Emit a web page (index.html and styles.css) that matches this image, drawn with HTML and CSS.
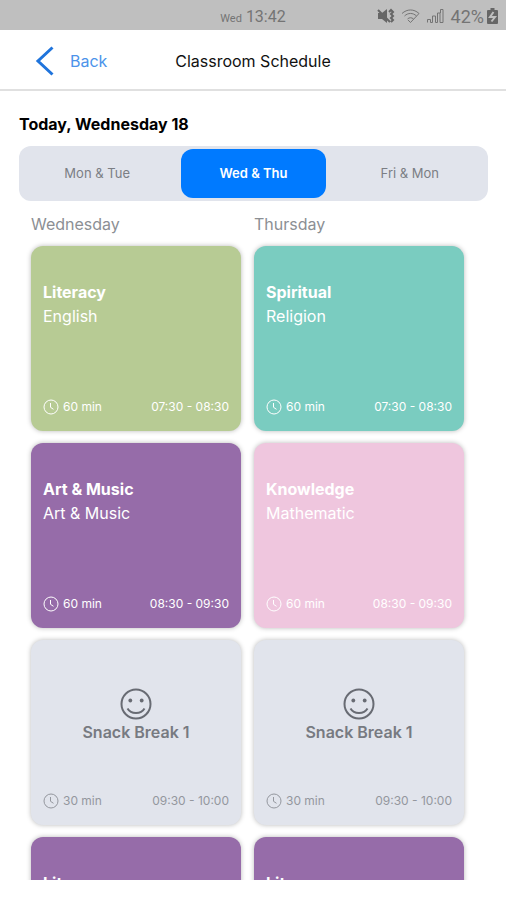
FILE: index.html
```html
<!DOCTYPE html>
<html lang="en">
<head>
<meta charset="utf-8">
<meta name="viewport" content="width=device-width, initial-scale=1">
<title>Classroom Schedule</title>
<link rel="stylesheet" href="styles.css">
</head>
<body>
<svg class="sprite" aria-hidden="true">
  <symbol id="clock" viewBox="0 0 16 16">
    <circle cx="8" cy="8" r="7"/>
    <path d="M7.500 4v4.300l3 2"/>
  </symbol>
  <symbol id="smile" viewBox="0 0 32 32">
    <circle cx="16" cy="16" r="14.500"/>
    <circle class="eye" cx="10.300" cy="12.500" r="1.900"/>
    <circle class="eye" cx="21.700" cy="12.500" r="1.900"/>
    <path d="M7.500 20.500c3.500 6 13.500 6 17 0"/>
  </symbol>
</svg>

<div class="status">
  <div class="status-time"><span class="status-day">Wed</span> 13:42</div>
  <div class="status-icons">
    <svg width="18" height="16" viewBox="0 0 18 16">
      <path class="solid" d="M1 5h4l5-4v14l-5-4H1z"/>
      <path class="heavy" d="M1 2l12 12M12 4l2-2 2 2-2 2 2 2-2 2 2 2-2 2"/>
    </svg>
    <svg width="19" height="16" viewBox="0 0 19 16">
      <path d="M1 5.500C6 .800 13 .800 18 5.500L9.500 14.500 7 12M3.500 8c3.500-3.400 8.500-3.400 12 0M6.500 11c1.800-1.700 4.200-1.700 6 0"/>
    </svg>
    <svg width="19" height="16" viewBox="0 0 19 16">
      <path d="M1.500 14.500v-3h3v3h2V8h3v6.500h2V5h2.500v9.500h3V1.500h-2.500V5"/>
    </svg>
    <span class="battery-level">42%</span>
    <svg width="11" height="16" viewBox="0 0 11 16">
      <path class="solid" d="M3.500 0h4v2H10a1 1 0 0 1 1 1v12a1 1 0 0 1-1 1H1a1 1 0 0 1-1-1V3a1 1 0 0 1 1-1h2.500z"/>
      <path class="cutout" d="M6.500 4L3 9h5l-3.500 4.500"/>
    </svg>
  </div>
</div>

<header class="nav">
  <a class="back" href="#">
    <svg width="18" height="30" viewBox="0 0 18 30"><path d="M16.500 1.500L2 15l14.500 13.500"/></svg>
    <span>Back</span>
  </a>
  <h1 class="nav-title">Classroom Schedule</h1>
</header>

<main class="content">
  <h2 class="today">Today, Wednesday 18</h2>

  <div class="segments" role="tablist">
    <button class="segment" type="button" role="tab" aria-selected="false">Mon &amp; Tue</button>
    <button class="segment active" type="button" role="tab" aria-selected="true">Wed &amp; Thu</button>
    <button class="segment" type="button" role="tab" aria-selected="false">Fri &amp; Mon</button>
  </div>

  <div class="days">
    <section class="day">
      <h3 class="day-name">Wednesday</h3>
      <article class="card green">
        <div class="subject"><h4>Literacy</h4><p>English</p></div>
        <footer class="meta"><svg class="clock"><use href="#clock"/></svg><span>60 min</span><time>07:30 - 08:30</time></footer>
      </article>
      <article class="card purple">
        <div class="subject"><h4>Art &amp; Music</h4><p>Art &amp; Music</p></div>
        <footer class="meta"><svg class="clock"><use href="#clock"/></svg><span>60 min</span><time>08:30 - 09:30</time></footer>
      </article>
      <article class="card break">
        <div class="rest"><svg class="smile"><use href="#smile"/></svg><h4>Snack Break 1</h4></div>
        <footer class="meta"><svg class="clock"><use href="#clock"/></svg><span>30 min</span><time>09:30 - 10:00</time></footer>
      </article>
      <article class="card purple">
        <div class="subject"><h4>Literacy</h4></div>
      </article>
    </section>

    <section class="day">
      <h3 class="day-name">Thursday</h3>
      <article class="card teal">
        <div class="subject"><h4>Spiritual</h4><p>Religion</p></div>
        <footer class="meta"><svg class="clock"><use href="#clock"/></svg><span>60 min</span><time>07:30 - 08:30</time></footer>
      </article>
      <article class="card pink">
        <div class="subject"><h4>Knowledge</h4><p>Mathematic</p></div>
        <footer class="meta"><svg class="clock"><use href="#clock"/></svg><span>60 min</span><time>08:30 - 09:30</time></footer>
      </article>
      <article class="card break">
        <div class="rest"><svg class="smile"><use href="#smile"/></svg><h4>Snack Break 1</h4></div>
        <footer class="meta"><svg class="clock"><use href="#clock"/></svg><span>30 min</span><time>09:30 - 10:00</time></footer>
      </article>
      <article class="card purple">
        <div class="subject"><h4>Literacy</h4></div>
      </article>
    </section>
  </div>
</main>
</body>
</html>
```
FILE: styles.css
```css
* {
  box-sizing: border-box;
}

body {
  margin: 0;
  height: 100vh;
  display: flex;
  flex-direction: column;
  padding-bottom: 20px;
  background: #fff;
  color: #111;
  font-family: Inter, "Liberation Sans", sans-serif;
}

h1, h2, h3, h4, p {
  margin: 0;
  font-weight: 400;
}

svg {
  display: block;
  flex: none;
  fill: none;
  stroke: currentColor;
  overflow: visible;
}

.sprite {
  position: absolute;
  width: 0;
  height: 0;
}

/* Status bar */
.status {
  flex: none;
  display: grid;
  grid-template-columns: 1fr auto 1fr;
  align-items: center;
  height: 30px;
  padding: 2px 8px 0;
  background: #bfbfbf;
  color: #747474;
  font-family: Roboto, sans-serif;
}

.status-time {
  grid-column: 2;
  font-size: 16px;
}

.status-day {
  font-size: 11px;
}

.status-icons {
  display: flex;
  justify-content: flex-end;
  align-items: center;
  gap: 6px;
}

.battery-level {
  margin-right: -3px;
  font-size: 18px;
}

.solid {
  fill: #666;
  stroke: none;
}

.heavy {
  stroke: #666;
  stroke-width: 2;
}

.cutout {
  stroke: #bfbfbf;
  stroke-width: 2;
}

/* Navigation bar */
.nav {
  flex: none;
  display: grid;
  grid-template-columns: 1fr auto 1fr;
  align-items: center;
  height: 61px;
  padding: 2px 36px 0;
  border-bottom: 2px solid #e0e0e0;
}

.back {
  display: flex;
  align-items: center;
  gap: 16px;
  color: #4c93ea;
  font-size: 16px;
  text-decoration: none;
}

.back svg {
  color: #1f74dc;
  stroke-width: 3;
}

.nav-title {
  font-size: 16px;
}

/* Scrolling content */
.content {
  flex: 1;
  min-height: 0;
  overflow: hidden;
  padding: 21px 18px 0 19px;
}

.today {
  font-size: 16px;
  line-height: 24px;
  font-weight: 700;
  color: #000;
}

.segments {
  display: flex;
  margin-top: 10px;
  padding: 3px 0;
  border-radius: 12px;
  background: #e1e4ec;
}

.segment {
  flex: 1;
  height: 49px;
  margin: 0 6px;
  padding: 0 0 2px;
  border: 0;
  border-radius: 12px;
  background: none;
  color: #7b7e84;
  font: 400 13px/16px Inter, "Liberation Sans", sans-serif;
}

.segment.active {
  background: #007aff;
  color: #fff;
  font-weight: 600;
}

.days {
  display: grid;
  grid-template-columns: 1fr 1fr;
  gap: 13px;
  padding: 13px 24px 0 12px;
}

.day {
  display: flex;
  flex-direction: column;
  gap: 12px;
}

.day-name {
  color: #8c8f94;
  font-size: 16px;
  line-height: 20px;
}

.card {
  display: flex;
  flex-direction: column;
  justify-content: space-between;
  height: 185px;
  padding: 34px 12px 16px;
  border-radius: 12px;
  color: #fff;
  box-shadow: 0 0 5px rgba(0, 0, 0, 0.28);
}

.green { background: #b7cb94; }
.teal { background: #7accc0; }
.purple { background: #966ca9; }
.pink { background: #efc6de; }
.break { background: #e1e4ec; color: #94979e; }

.card h4, .card p {
  font-size: 16px;
  line-height: 24px;
}

.card h4 {
  font-weight: 700;
}

.rest {
  display: flex;
  flex-direction: column;
  align-items: center;
  padding-top: 14px;
  color: #686b73;
}

.card .rest h4 {
  color: #777a81;
  font-weight: 600;
}

.smile {
  width: 32px;
  height: 32px;
  stroke-width: 2;
}

.eye {
  fill: currentColor;
  stroke: none;
}

.meta {
  display: flex;
  align-items: center;
  gap: 4px;
  font-size: 12px;
  line-height: 16px;
}

.clock {
  width: 16px;
  height: 16px;
}

.meta time {
  margin-left: auto;
}
```
